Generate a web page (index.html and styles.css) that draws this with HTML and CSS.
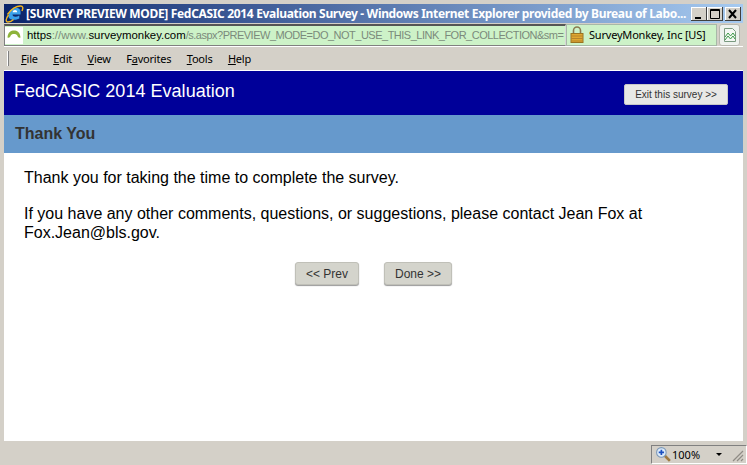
FILE: index.html
```html
<!DOCTYPE html>
<html lang="en">
<head>
    <meta charset="UTF-8">
    <meta name="viewport" content="width=device-width, initial-scale=1.0">
    <title>Survey preview</title>
    <link rel="stylesheet" href="styles.css">
</head>
<body>
    <div class="window">
        <div class="titlebar">
            <svg class="ie-logo" width="19" height="18" viewBox="0 0 19 18">
                <path d="M3.500 10.500C4 6 7.500 3 11.500 3c3.500 0 4.500 2.500 4 6.500H7.500c.2 2.500 3.500 3 6.800 1v3c-4.500 2.500-11.300 1.500-10.800-3z" fill="#3aa0ea"/>
                <path d="M7.600 7.200h4.600c0-2.900-4.300-2.900-4.600 0z" fill="#fff"/>
                <path d="M2.500 9.500C6 4 11.500 1 15.500 1c2.500 0 3 2 1.500 5M3.500 10C.5 14 .5 17 3 17c2 0 4-1 5.500-2.500" fill="none" stroke="#f2b61f" stroke-width="1.400"/>
            </svg>
            <span class="title-text">[SURVEY PREVIEW MODE] FedCASIC 2014 Evaluation Survey - Windows Internet Explorer provided by Bureau of Labo...</span>
            <div class="window-btns">
                <div class="win-btn">
                    <svg width="16" height="14" viewBox="0 0 16 14"><rect x="4" y="10" width="6" height="2" fill="#000"/></svg>
                </div>
                <div class="win-btn">
                    <svg width="16" height="14" viewBox="0 0 16 14"><path d="M3.500 2.500h9v9h-9zM3 3.500h10" fill="none" stroke="#000"/></svg>
                </div>
                <div class="win-btn">
                    <svg width="16" height="14" viewBox="0 0 16 14"><path d="M4 3l7 8M11 3l-7 8" stroke="#000" stroke-width="2" fill="none"/></svg>
                </div>
            </div>
        </div>

        <div class="addressbar">
            <div class="url-box">
                <div class="favicon">
                    <svg width="16" height="14" viewBox="0 0 16 14">
                        <path d="M1.500 9.500C2 4 5 2.500 8 2.500s6 1.500 6.500 7c-1.500.5-2.500 0-3-1.500C11 6.500 9.500 6 8 6s-3 .5-3.500 2c-.5 1.500-1.500 2-3 1.500z" fill="#8db33a"/>
                    </svg>
                </div>
                <span class="url"><span class="url-strong">https</span>://www.<span class="url-strong">surveymonkey.com</span><span class="url-path">/s.aspx?PREVIEW_MODE=DO_NOT_USE_THIS_LINK_FOR_COLLECTION&amp;sm=</span></span>
            </div>
            <div class="cert-box">
                <svg width="14" height="17" viewBox="0 0 14 17">
                    <path d="M3.500 8V4.500a3.500 3.500 0 0 1 7 0V8" fill="none" stroke="#8a7a50" stroke-width="1.600"/>
                    <rect x="1" y="7.500" width="12" height="9" fill="#e0a830" stroke="#9a7420"/>
                    <path d="M1 10h12M1 12.500h12M1 15h12" stroke="#b5842a"/>
                </svg>
                <span>SurveyMonkey, Inc [US]</span>
            </div>
            <div class="compat-btn">
                <svg width="14" height="16" viewBox="0 0 14 16">
                    <path d="M1.500 1.500h8l3 3v10h-11z" fill="#f4f8f4" stroke="#7a9a80"/>
                    <path d="M2 10l3-4 2.500 3L10 6l2 3M2 13l3-4 2.500 3L10 9l2 3" fill="none" stroke="#3c9a48"/>
                </svg>
            </div>
        </div>

        <div class="menubar">
            <div class="grip"></div>
            <a class="menu-item"><u>F</u>ile</a>
            <a class="menu-item"><u>E</u>dit</a>
            <a class="menu-item"><u>V</u>iew</a>
            <a class="menu-item">F<u>a</u>vorites</a>
            <a class="menu-item"><u>T</u>ools</a>
            <a class="menu-item"><u>H</u>elp</a>
        </div>

        <div class="page">
            <header class="survey-header">
                <h1>FedCASIC 2014 Evaluation</h1>
                <button class="exit-btn">Exit this survey &gt;&gt;</button>
            </header>
            <h2 class="page-title">Thank You</h2>
            <div class="survey-body">
                <p>Thank you for taking the time to complete the survey.</p>
                <p>If you have any other comments, questions, or suggestions, please contact Jean Fox at Fox.Jean@bls.gov.</p>
                <div class="nav-btns">
                    <button class="nav-btn prev">&lt;&lt; Prev</button>
                    <button class="nav-btn done">Done &gt;&gt;</button>
                </div>
            </div>
        </div>

        <div class="statusbar">
            <div class="zoom-box">
                <svg width="17" height="17" viewBox="0 0 16 16">
                    <path d="M9 9l5 5" stroke="#a07a40" stroke-width="2.500"/>
                    <circle cx="6" cy="6" r="4.500" fill="#dcebfa" stroke="#7c98b8"/>
                    <path d="M3.500 6h5M6 3.500v5" stroke="#1c50c0" stroke-width="1.600"/>
                </svg>
                <span class="zoom-value">100%</span>
                <span class="zoom-arrow"></span>
            </div>
            <svg class="resize-grip" width="13" height="13" viewBox="0 0 13 13">
                <path d="M12 2L2 12M12 6l-6 6M12 10l-2 2" stroke="#8f8c85" stroke-width="1.200"/>
            </svg>
        </div>
    </div>
</body>
</html>
```

FILE: styles.css
```css
html, body {
    margin: 0;
    padding: 0;
    height: 100%;
    overflow: hidden;
}
.window {
    display: flex;
    flex-direction: column;
    height: 465px;
    box-sizing: border-box;
    padding-top: 4px;
    background-color: #d4d0c8;
    font-family: "DejaVu Sans", sans-serif;
}
.titlebar {
    display: flex;
    align-items: center;
    height: 19px;
    margin: 0 4px;
    background: linear-gradient(to right, #0a246a, #a6caf0);
    color: white;
}
.ie-logo {
    margin-left: 1px;
    flex: none;
}
.title-text {
    flex: 1;
    margin-left: 2px;
    font-family: "Noto Sans", sans-serif;
    font-weight: bold;
    font-size: 12px;
    letter-spacing: -0.33px;
    white-space: nowrap;
}
.window-btns {
    display: flex;
    margin-right: 2px;
}
.win-btn {
    width: 16px;
    height: 14px;
    background-color: #d4d0c8;
    box-shadow: inset -1px -1px 0 #404040, inset 1px 1px 0 #fff;
}
.win-btn:last-child {
    margin-left: 2px;
}
.win-btn svg {
    display: block;
}
.addressbar {
    display: flex;
    align-items: center;
    height: 23px;
    margin: 0 4px;
    background-color: #d4d0c8;
}
.url-box {
    display: flex;
    align-items: center;
    box-sizing: border-box;
    width: 562px;
    height: 22px;
    background-color: #cdf2c8;
    border: 1px solid #808080;
    border-top: 2px solid #555;
    border-right-color: #d8d8d8;
}
.favicon {
    display: flex;
    align-items: center;
    justify-content: center;
    width: 18px;
    height: 17px;
    margin-right: 4px;
    background-color: #fff;
}
.url {
    color: #7b8a7b;
    font-family: "Liberation Sans", sans-serif;
    font-size: 11.4px;
    white-space: nowrap;
}
.url-strong {
    color: #000;
}
.url-path {
    font-size: 11px;
    letter-spacing: -0.5px;
}
.cert-box {
    display: flex;
    align-items: center;
    gap: 5px;
    box-sizing: border-box;
    width: 151px;
    height: 22px;
    padding-left: 3px;
    background-color: #cdf2c8;
    border: 1px solid #a8b8a8;
    font-family: "Noto Sans", sans-serif;
    font-size: 11px;
    letter-spacing: -0.2px;
    color: #000;
}
.compat-btn {
    display: flex;
    align-items: center;
    justify-content: center;
    box-sizing: border-box;
    width: 21px;
    height: 22px;
    margin-left: 2px;
    background-color: #eef2ee;
    border: 1px solid #b8b8b0;
    border-radius: 3px;
}
.menubar {
    display: flex;
    align-items: center;
    height: 23px;
    margin: 0 4px;
    border-top: 1px solid #fff;
    font-family: "Noto Sans", sans-serif;
    font-size: 11px;
    letter-spacing: -0.2px;
    color: #000;
}
.grip {
    width: 1px;
    height: 15px;
    margin: 0 12px 0 3px;
    background-color: #808080;
    border-left: 1px solid #fff;
}
.menu-item {
    margin-right: 15.4px;
}
.page {
    flex: 1;
    display: flex;
    flex-direction: column;
    margin: 0 4px;
    background-color: white;
    border-top: 1px solid #fff;
    font-family: "Liberation Sans", Arial, sans-serif;
}
.survey-header {
    display: flex;
    align-items: center;
    justify-content: space-between;
    height: 44px;
    padding: 0 15px 0 10px;
    background-color: #000099;
}
.survey-header h1 {
    margin: 0 0 3px;
    font-size: 18px;
    font-weight: normal;
    letter-spacing: 0.03px;
    color: white;
}
.exit-btn {
    width: 104px;
    height: 21px;
    margin-top: 3px;
    padding: 0;
    background-color: #e8e8e6;
    border: 1px solid #c8c8c8;
    border-radius: 2px;
    color: #333;
    font-family: "Liberation Sans", Arial, sans-serif;
    font-size: 10px;
}
.page-title {
    margin: 0;
    height: 38px;
    line-height: 38px;
    padding-left: 11px;
    background-color: #6699cc;
    color: #333;
    font-size: 16px;
    font-weight: bold;
}
.survey-body {
    flex: 1;
    padding: 15px 20px;
    font-size: 16px;
    line-height: 19px;
    color: #000;
}
.survey-body p {
    margin: 0 0 17px;
    padding-right: 60px;
}
.nav-btns {
    display: flex;
    justify-content: center;
    gap: 25px;
    margin-top: 20px;
}
.nav-btn {
    height: 23px;
    padding: 0;
    background-color: #d4d4cc;
    border: 1px solid #c0c0b8;
    border-radius: 3px;
    box-shadow: 0 1px 1px #999;
    color: #333;
    font-family: "Liberation Sans", Arial, sans-serif;
    font-size: 12px;
}
.prev {
    width: 64px;
}
.done {
    width: 68px;
}
.statusbar {
    display: flex;
    justify-content: flex-end;
    align-items: flex-end;
    height: 24px;
    background-color: #d4d0c8;
    position: relative;
}
.zoom-box {
    display: flex;
    align-items: center;
    box-sizing: border-box;
    width: 96px;
    height: 19px;
    margin-bottom: 1px;
    padding-left: 3px;
    border-left: 1px solid #808080;
    border-top: 1px solid #808080;
    border-right: 1px solid #fff;
    border-bottom: 1px solid #fff;
    font-family: "Noto Sans", sans-serif;
    font-size: 11px;
    color: #000;
}
.zoom-value {
    margin-left: 0;
}
.zoom-arrow {
    width: 0;
    height: 0;
    margin-left: 16px;
    border-left: 3px solid transparent;
    border-right: 3px solid transparent;
    border-top: 3px solid #000;
}
.resize-grip {
    position: absolute;
    right: 3px;
    bottom: 3px;
}
```
